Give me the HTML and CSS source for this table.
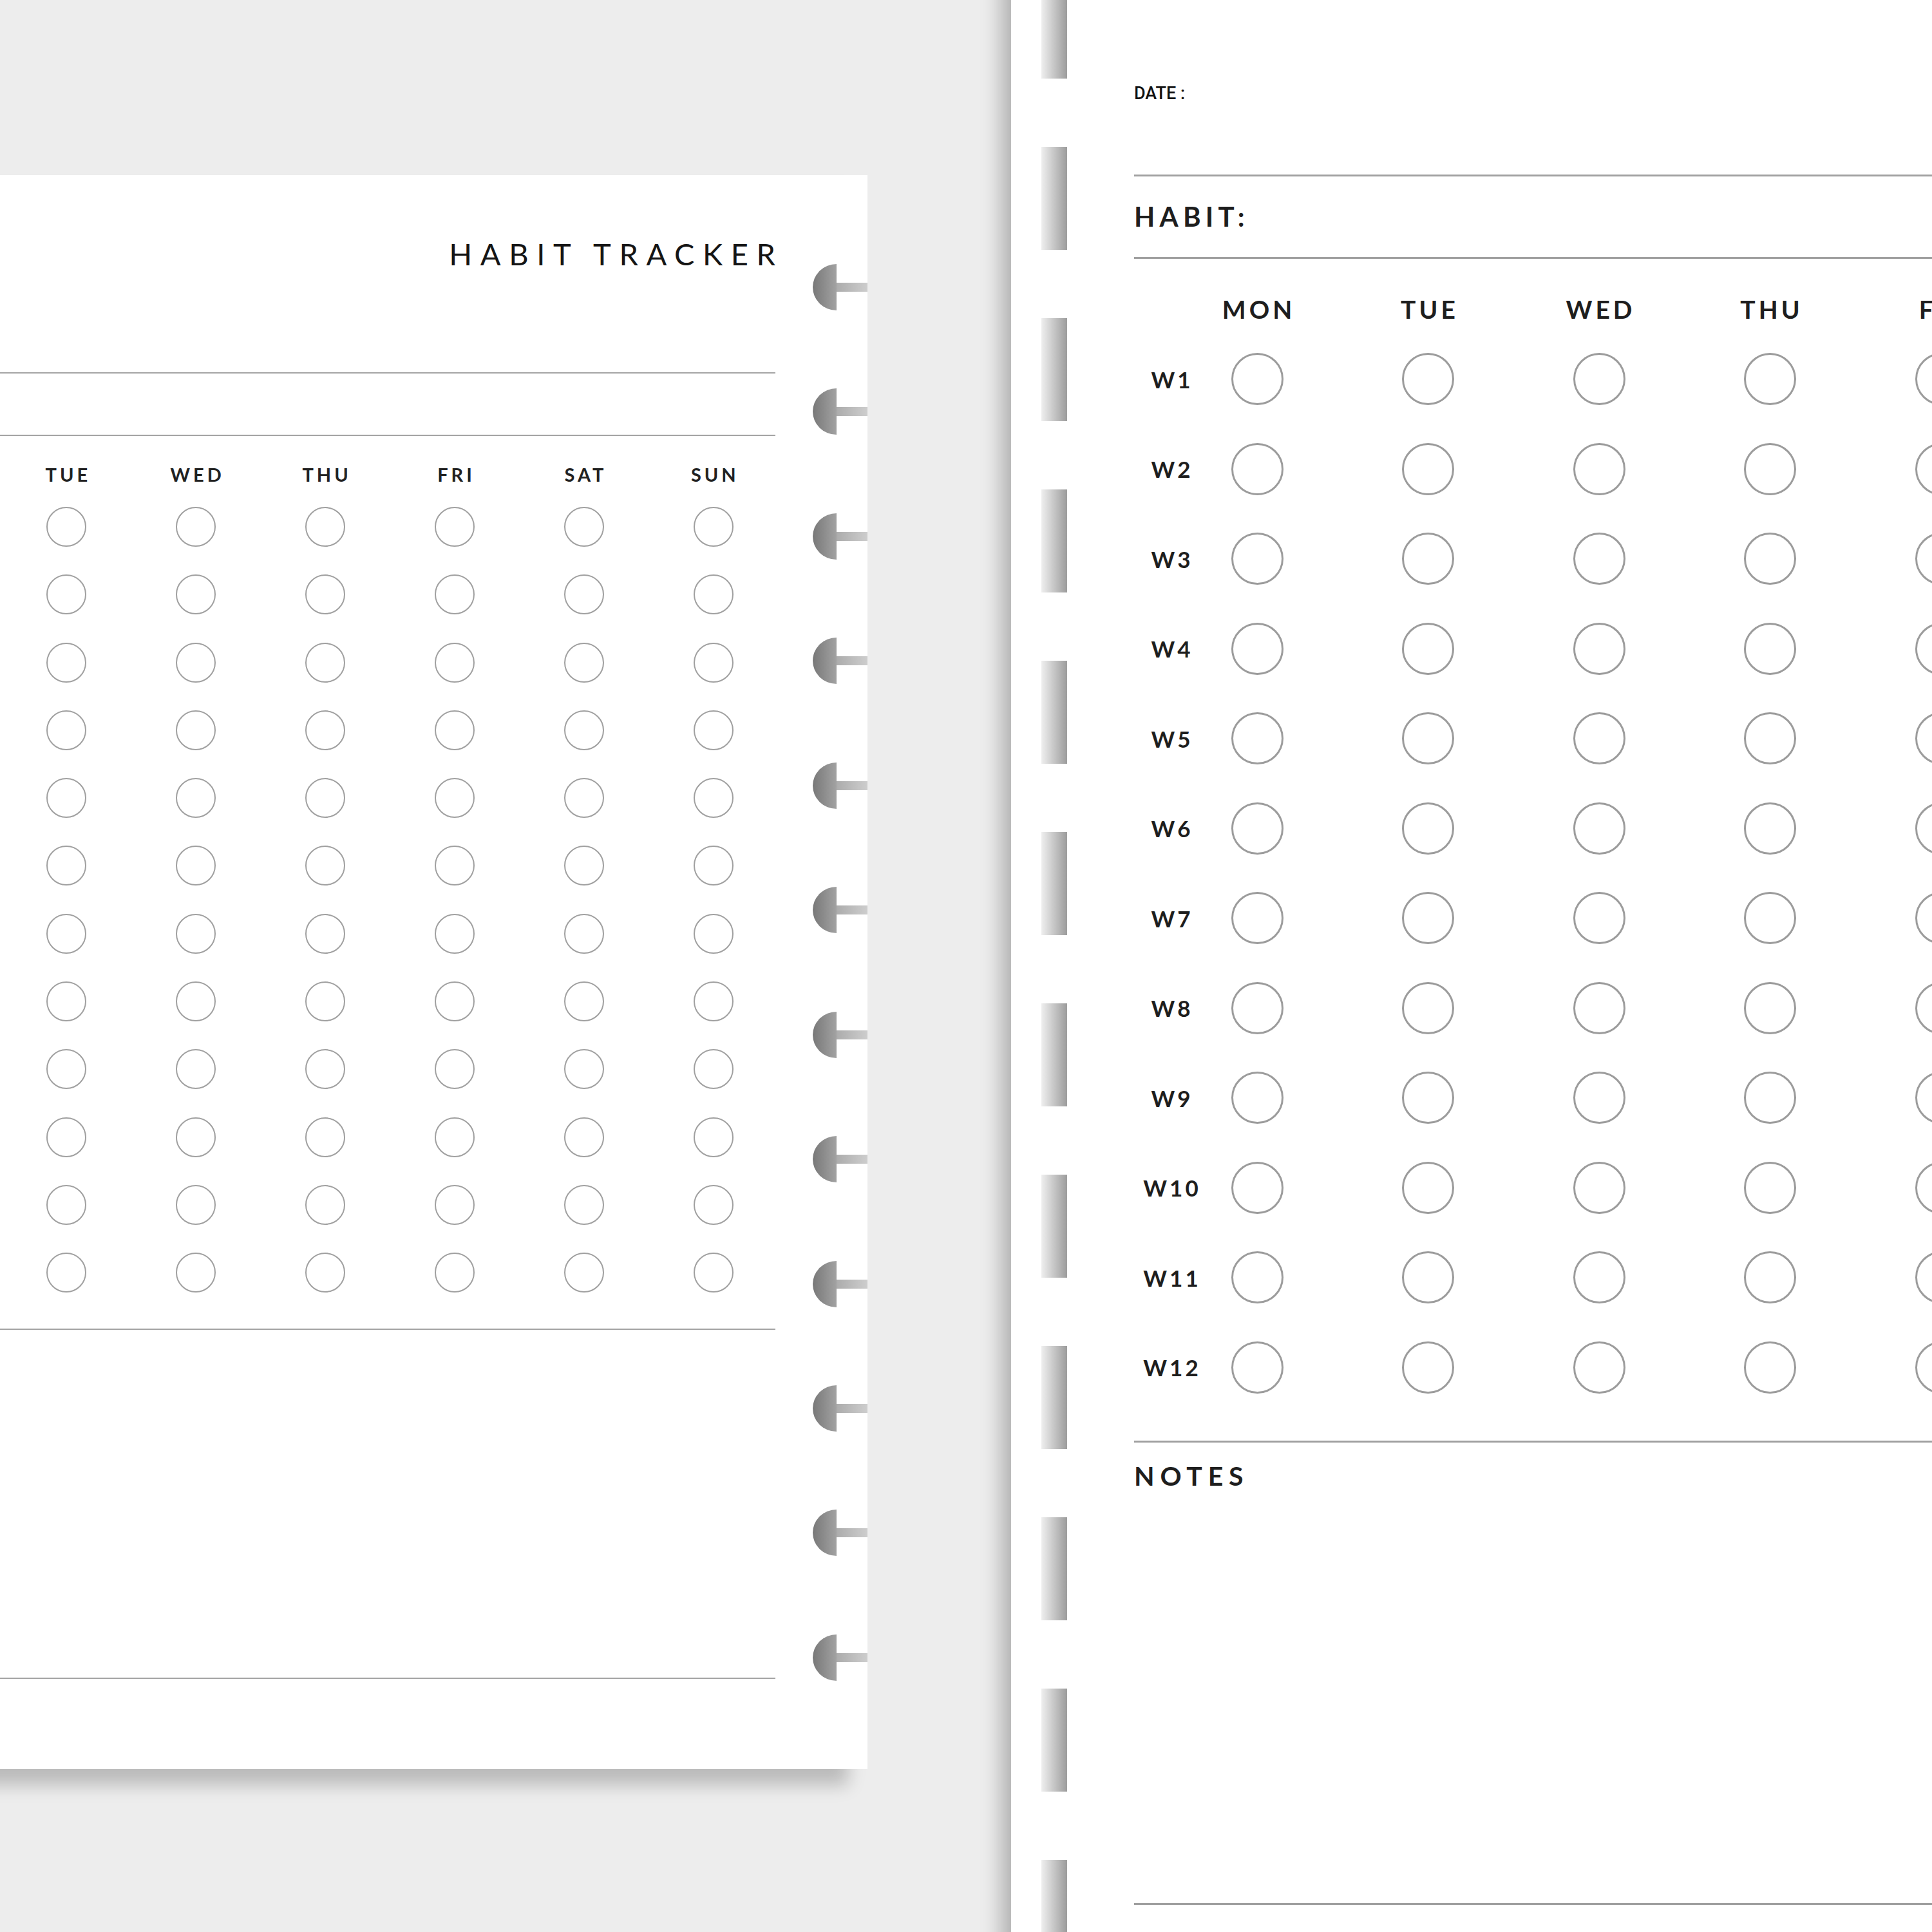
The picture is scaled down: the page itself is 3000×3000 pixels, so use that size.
FILE: index.html
```html
<!DOCTYPE html>
<html lang="en">
<head>
<meta charset="utf-8">
<title>Habit Tracker</title>
<link rel="stylesheet" href="styles.css">
</head>
<body>
<div class="scene">
  <div class="left-zone">
    <section class="lpage">
      <div class="ltitle"><h1>HABIT TRACKER</h1></div>
      <div class="lhabit"></div>
      <div class="lgrid-sec">
        <div class="lgrid" id="lgrid">
          <div class="lhead">MON</div><div class="lhead">TUE</div><div class="lhead">WED</div><div class="lhead">THU</div><div class="lhead">FRI</div><div class="lhead">SAT</div><div class="lhead">SUN</div>
        </div>
      </div>
      <div class="lnotes"></div>
      <div class="rings" id="rings"></div>
    </section>
  </div>
  <section class="rpage">
    <div class="slots" id="slots"></div>
    <div class="rdate"><span class="date-label">DATE :</span></div>
    <div class="rhabit"><h2 class="habit-label">HABIT:</h2></div>
    <div class="rgrid-sec">
      <div class="rgrid" id="rgrid">
        <div class="rlabel"></div>
        <div class="rcell rtop"><span class="rhead">MON</span></div>
        <div class="rcell rtop"><span class="rhead">TUE</span></div>
        <div class="rcell rtop"><span class="rhead">WED</span></div>
        <div class="rcell rtop"><span class="rhead">THU</span></div>
        <div class="rcell rtop"><span class="rhead">FRI</span></div>
      </div>
    </div>
    <div class="rnotes"><h2 class="notes-label">NOTES</h2></div>
  </section>
</div>
<script>
(function () {
  var lg = document.getElementById('lgrid');
  for (var r = 0; r < 12; r++) {
    for (var c = 0; c < 7; c++) {
      var cell = document.createElement('div');
      cell.className = 'lcell';
      var o = document.createElement('span');
      o.className = 'lcircle';
      cell.appendChild(o);
      lg.appendChild(cell);
    }
  }
  var rg = document.getElementById('rgrid');
  for (var w = 1; w <= 12; w++) {
    var lab = document.createElement('div');
    lab.className = 'rlabel';
    lab.textContent = 'W' + w;
    rg.appendChild(lab);
    for (var d = 0; d < 5; d++) {
      var rc = document.createElement('div');
      rc.className = 'rcell';
      var ro = document.createElement('span');
      ro.className = 'rcircle';
      rc.appendChild(ro);
      rg.appendChild(rc);
    }
  }
  var rings = document.getElementById('rings');
  for (var i = 0; i < 12; i++) {
    var ring = document.createElement('div');
    ring.className = 'ring';
    ring.innerHTML = '<span class="disc"></span><span class="bar"></span>';
    rings.appendChild(ring);
  }
  var slots = document.getElementById('slots');
  for (var s = 0; s < 13; s++) {
    var sl = document.createElement('span');
    sl.className = 'slot';
    slots.appendChild(sl);
  }
})();
</script>
</body>
</html>
```

FILE: styles.css
```css
html, body {
  margin: 0;
  padding: 0;
  width: 3000px;
  height: 3000px;
  overflow: hidden;
  background: #ededed;
}

* { box-sizing: border-box; }

h1, h2 { margin: 0; font-weight: inherit; }

.scene {
  display: flex;
  width: 3000px;
  height: 3000px;
}

/* ---------- left page ---------- */
.left-zone {
  flex: 0 0 1570px;
}

.lpage {
  position: relative;
  margin-left: -300px;
  margin-top: 272px;
  width: 1647px;
  height: 2475px;
  padding: 0 143px 0 102px;
  background: #ffffff;
  box-shadow: -30px 25px 25px rgba(0, 0, 0, 0.21);
  font-family: Lato, "Open Sans", sans-serif;
  color: #1c1c1c;
}

.ltitle {
  height: 308px;
  padding-top: 99px;
  border-bottom: 2px solid #a4a4a4;
  text-align: right;
}

.ltitle h1 {
  font-size: 47px;
  line-height: 47px;
  font-weight: 400;
  letter-spacing: 12.6px;
  margin-right: -12.6px;
  color: #151515;
}

.lhabit {
  height: 97px;
  border-bottom: 2px solid #a4a4a4;
}

.lgrid-sec {
  height: 1388px;
  padding-top: 45px;
  border-bottom: 2px solid #a4a4a4;
}

.lgrid {
  display: grid;
  grid-template-columns: repeat(7, 200.9px);
  grid-template-rows: 43.3px repeat(12, 105.3px);
}

.lhead {
  font-size: 29px;
  line-height: 29px;
  font-weight: 700;
  letter-spacing: 5px;
  padding-left: 5px;
  text-align: center;
  color: #222;
}

.lcell {
  display: flex;
  align-items: center;
  justify-content: center;
}

.lcircle {
  display: block;
  width: 62px;
  height: 62px;
  border: 2px solid #a0a0a0;
  border-radius: 50%;
}

.lnotes {
  height: 542px;
  border-bottom: 2px solid #a4a4a4;
}

.rings {
  position: absolute;
  right: 0;
  top: 138px;
  display: flex;
  flex-direction: column;
  gap: 121.45px;
}

.ring {
  display: flex;
  align-items: center;
  height: 72px;
}

.disc {
  display: block;
  width: 37px;
  height: 72px;
  border-radius: 100% 0 0 100% / 50% 0 0 50%;
  background: linear-gradient(90deg, #787878, #a2a2a2);
}

.bar {
  display: block;
  width: 48px;
  height: 14px;
  background: linear-gradient(90deg, #acacac, #cdcdcd);
}

/* ---------- right page ---------- */
.rpage {
  position: relative;
  flex: 0 0 1600px;
  margin-top: -100px;
  height: 3200px;
  padding: 100px 0 0 191px;
  background: #ffffff;
  box-shadow: -30px 0 30px -15px rgba(0, 0, 0, 0.26);
  font-family: Lato, "Open Sans", sans-serif;
  color: #1c1c1c;
}

.slots {
  position: absolute;
  left: 47px;
  top: 62px;
  display: flex;
  flex-direction: column;
  gap: 106px;
}

.slot {
  display: block;
  width: 40px;
  height: 160px;
  background: linear-gradient(90deg, #efefef, #9c9c9c);
}

.rdate {
  height: 274px;
  padding-top: 131.5px;
  border-bottom: 3px solid #a0a0a0;
}

.date-label {
  display: block;
  font-family: Roboto, "Liberation Sans", sans-serif;
  font-weight: 500;
  font-size: 27px;
  line-height: 27px;
  color: #111;
}

.rhabit {
  height: 128px;
  padding-top: 41px;
  border-bottom: 3px solid #a0a0a0;
}

.habit-label {
  font-size: 42px;
  line-height: 42px;
  font-weight: 700;
  letter-spacing: 7.2px;
  color: #1e1e1e;
}

.rgrid-sec {
  height: 1838px;
  padding-top: 59.4px;
  border-bottom: 3px solid #a0a0a0;
}

.rgrid {
  display: grid;
  grid-template-columns: 114px repeat(5, 265.5px);
  grid-template-rows: 57.85px repeat(12, 139.5px);
}

.rcell {
  width: 154px;
  display: flex;
  justify-content: center;
  align-items: center;
}

.rcell.rtop {
  align-items: flex-start;
}

.rhead {
  font-size: 39px;
  line-height: 39px;
  font-weight: 700;
  letter-spacing: 5px;
  padding-left: 5px;
  color: #1e1e1e;
}

.rlabel {
  display: flex;
  align-items: center;
  justify-content: center;
  font-size: 35px;
  font-weight: 700;
  letter-spacing: 4px;
  padding-left: 4px;
  color: #1e1e1e;
}

.rcircle {
  display: block;
  width: 81px;
  height: 81px;
  border: 3px solid #9c9c9c;
  border-radius: 50%;
}

.rnotes {
  height: 718px;
  padding-top: 31px;
  border-bottom: 3px solid #a0a0a0;
}

.notes-label {
  font-size: 41px;
  line-height: 41px;
  font-weight: 700;
  letter-spacing: 8.8px;
  color: #1e1e1e;
}
```
